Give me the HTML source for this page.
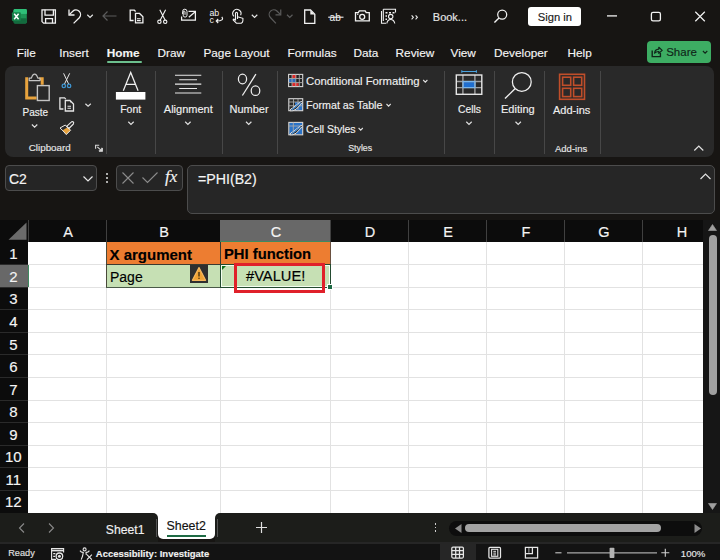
<!DOCTYPE html>
<html><head><meta charset="utf-8">
<style>
html,body{margin:0;padding:0;}
body{width:720px;height:560px;position:relative;overflow:hidden;background:#171513;font-family:"Liberation Sans",sans-serif;}
.t{position:absolute;line-height:1;white-space:nowrap;-webkit-text-stroke:0.15px currentColor;}
svg{overflow:visible}
</style></head><body>
<svg style="position:absolute;left:0px;top:0px" width="720" height="34" viewBox="0 0 720 34">
<g>
<rect x="13.6" y="9" width="13.2" height="14.4" rx="1.3" fill="#1e9456"/>
<rect x="13.6" y="9" width="13.2" height="4.8" rx="1.3" fill="#2fbf78"/>
<rect x="13.6" y="11" width="13.2" height="2.8" fill="#2fbf78"/>
<rect x="13.6" y="18.6" width="13.2" height="4.8" rx="1.3" fill="#136b3e"/>
<rect x="13.6" y="18.6" width="13.2" height="2" fill="#136b3e"/>
<rect x="11.9" y="12.2" width="8.9" height="8.8" rx="1" fill="#17804a"/>
<path d="M14.2 13.8 L18.6 19.3 M18.6 13.8 L14.2 19.3" stroke="#fff" stroke-width="1.5"/>
</g>
<g fill="none" stroke="#f2f2f2" stroke-width="1.3">
<path d="M42 9.8 H55.4 V23.2 H43.6 L42 21.6 Z"/>
<path d="M45 9.8 V15.2 H53.4 V9.8"/>
<path d="M45.6 23.2 V18.7 H52.5 V23.2"/>
<path d="M69 9.5 V15 H74.5" />
<path d="M69.6 14.4 L72.8 11.2 A4.6 4.6 0 0 1 79.3 17.7 L73.6 23.4"/>
</g>
<path d="M87.3 14.8 L90.05 17.400000000000002 L92.8 14.8" fill="none" stroke="#e6e6e6" stroke-width="1.2"/>
<path d="M116.5 16 H103 M107.5 11.5 L103 16 L107.5 20.5" fill="none" stroke="#5c5c5c" stroke-width="1.2"/>
<g fill="none" stroke="#f2f2f2" stroke-width="1.3">
<path d="M133.6 20.5 H130.2 V10.2 H134.3 L135.6 11.5"/>
<path d="M135.5 13.4 H139.6 L142.9 16.8 V22.9 H135.5 Z"/>
<path d="M137 18.8 H140.7 M137 20.6 H140.7" stroke-width="1.1"/>
</g>
<circle cx="140.3" cy="14.6" r="0.7" fill="#f2f2f2"/>
<g fill="none" stroke="#f2f2f2" stroke-width="1.1">
<path d="M159.8 9.7 L165.2 20.2 M165.6 9.7 L160.2 20.2"/>
<circle cx="159.4" cy="21.8" r="1.7"/>
<circle cx="165.2" cy="21.8" r="1.7"/>
</g>
<g fill="none" stroke="#f2f2f2" stroke-width="1.25">
<path d="M181.6 16.5 V20.1 H195.4 V11.3 H188.5"/>
<path d="M188.8 17.2 L195 11.9"/>
<path d="M182.6 14 V11.4 A2.2 2.2 0 0 1 187 11.4 V15.2 A1.9 1.9 0 0 1 183.2 15.2 V12 A0.9 0.9 0 0 1 185 12 V14.8" stroke-width="1"/>
</g>
<text x="209.4" y="16.4" font-family="Liberation Sans" font-size="8.8" fill="#f2f2f2">ab</text>
<text x="209.6" y="23.4" font-family="Liberation Sans" font-size="8.8" fill="#f2f2f2">c</text>
<path d="M221.8 16.8 C223.8 19.5 222 21 216.3 21 M218.2 19 L216.2 21 L218.2 23" fill="none" stroke="#f2f2f2" stroke-width="1.1"/>
<g fill="none" stroke="#f2f2f2" stroke-width="1.1">
<path d="M233.9 16.3 A4.1 4.1 0 1 1 240.6 15.2"/>
<path d="M237.5 19 V13.2 A1 1 0 0 0 235.5 13.2 V20 L234.3 19.2 Q233 18.8 233.2 20 L236.4 23.2 H241.3 Q242.9 22.5 242.9 20.5 V18.3 L237.5 16.8"/>
</g>
<path d="M251.8 14.8 L254.55 17.400000000000002 L257.3 14.8" fill="none" stroke="#e6e6e6" stroke-width="1.2"/>
<g fill="none" stroke="#5c5c5c" stroke-width="1.2">
<path d="M280.75 9.5 V14.8 H275.5"/>
<path d="M280.1 14.2 L276.9 11 A4.6 4.6 0 0 0 270.4 17.5 L275.9 23.3"/>
</g>
<path d="M287 14.8 L289.75 17.400000000000002 L292.5 14.8" fill="none" stroke="#5c5c5c" stroke-width="1.2"/>
<path d="M304.7 10 H310.5 L314.8 14.3 V23.4 H304.7 Z" fill="none" stroke="#f2f2f2" stroke-width="1.3"/>
<path d="M310.3 10.4 V14.5 H314.4 Z" fill="#f2f2f2"/>
<text x="329.6" y="20.6" font-family="Liberation Sans" font-size="10" fill="#f2f2f2">ab</text>
<path d="M328.2 17.2 H343.5" stroke="#f2f2f2" stroke-width="1.1"/>
<g fill="none" stroke="#f2f2f2" stroke-width="1.3">
<path d="M355.5 12.6 H358.3 L359.3 10.9 H365.2 L366.2 12.6 H369.3 V20.8 H355.5 Z"/>
<circle cx="362.2" cy="16.8" r="2.5"/>
</g>
<rect x="357" y="13.6" width="1.4" height="1.2" fill="#f2f2f2"/>
<g fill="none" stroke="#f2f2f2" stroke-width="1.1">
<path d="M383.3 9.3 H395.5 V12.5 M383.3 9.3 V21 M381.5 11 V23.2 H386"/>
<path d="M385.5 12.8 H387.5 M389 12.8 H391 M392.5 12.8 H394.5 M385.5 16 H387 M385.5 19.3 H387" stroke-width="1.4"/>
<circle cx="390.7" cy="16.6" r="2.2"/>
<path d="M386.8 23.5 Q387.5 19.5 390.7 19.5 Q393.9 19.5 394.8 23.5"/>
</g>
<path d="M411.6 15.3 L413.4 17.3 L411.6 19.3 M415.6 15.3 L417.4 17.3 L415.6 19.3" fill="none" stroke="#e8e8e8" stroke-width="1.1"/>
<g fill="none" stroke="#f2f2f2" stroke-width="1.25">
<circle cx="502.2" cy="14.6" r="4.5"/>
<path d="M499 17.9 L494.4 22.5" stroke-width="1.4"/>
</g>
<path d="M607 15.9 H617" stroke="#f2f2f2" stroke-width="1.3"/>
<rect x="651.4" y="12.3" width="9" height="8.6" rx="1.6" fill="none" stroke="#f2f2f2" stroke-width="1.3"/>
<path d="M695.3 11.8 L704.8 21.2 M704.8 11.8 L695.3 21.2" stroke="#f2f2f2" stroke-width="1.2"/>
</svg>
<div class="t" style="left:432.80px;top:11.99px;font-size:11px;color:#e6e6e6;">Book...</div>
<div style="position:absolute;left:528px;top:7px;width:53px;height:19px;background:#fff;border-radius:3px;"></div>
<div class="t" style="left:537.80px;top:11.82px;font-size:11.2px;color:#1a1a1a;">Sign in</div>
<div class="t" style="left:16.70px;top:47.51px;font-size:11.8px;color:#f4f4f4;">File</div>
<div class="t" style="left:59.20px;top:47.51px;font-size:11.8px;color:#f4f4f4;">Insert</div>
<div class="t" style="left:106.70px;top:47.51px;font-size:11.8px;color:#f4f4f4;font-weight:700;">Home</div>
<div class="t" style="left:157.50px;top:47.51px;font-size:11.8px;color:#f4f4f4;">Draw</div>
<div class="t" style="left:203.40px;top:47.51px;font-size:11.8px;color:#f4f4f4;">Page Layout</div>
<div class="t" style="left:287.50px;top:47.51px;font-size:11.8px;color:#f4f4f4;">Formulas</div>
<div class="t" style="left:353.40px;top:47.51px;font-size:11.8px;color:#f4f4f4;">Data</div>
<div class="t" style="left:395.60px;top:47.51px;font-size:11.8px;color:#f4f4f4;">Review</div>
<div class="t" style="left:450.50px;top:47.51px;font-size:11.8px;color:#f4f4f4;">View</div>
<div class="t" style="left:494.00px;top:47.51px;font-size:11.8px;color:#f4f4f4;">Developer</div>
<div class="t" style="left:567.50px;top:47.51px;font-size:11.8px;color:#f4f4f4;">Help</div>
<div style="position:absolute;left:107px;top:61px;width:35px;height:2px;background:#6cc08e;border-radius:1px;"></div>
<div style="position:absolute;left:647px;top:41px;width:64px;height:22px;background:#3dad63;border-radius:4px;"></div>
<svg style="position:absolute;left:640px;top:36px" width="80" height="30" viewBox="640 36 80 30">
<path d="M652.2 50.5 V56.6 H660.4 V53" fill="none" stroke="#10261a" stroke-width="1.4"/>
<path d="M654.6 53.2 Q654.8 49.3 658.8 49.1 V47.3 L662.2 50.4 L658.8 53.3 V51.5 Q656.2 51.4 654.6 53.2 Z" fill="none" stroke="#10261a" stroke-width="1.2" stroke-linejoin="round"/>
<path d="M702.9 51 L705.1 53.2 L707.3 51" fill="none" stroke="#10261a" stroke-width="1.1"/>
</svg>
<div class="t" style="left:666.20px;top:46.56px;font-size:11.5px;color:#10261a;">Share</div>
<div style="position:absolute;left:5px;top:66px;width:709px;height:91px;background:#292929;border-radius:8px;"></div>
<div style="position:absolute;left:106px;top:71px;width:1px;height:83px;background:#474747;"></div>
<div style="position:absolute;left:155px;top:71px;width:1px;height:83px;background:#474747;"></div>
<div style="position:absolute;left:222px;top:71px;width:1px;height:83px;background:#474747;"></div>
<div style="position:absolute;left:277px;top:71px;width:1px;height:83px;background:#474747;"></div>
<div style="position:absolute;left:444px;top:71px;width:1px;height:83px;background:#474747;"></div>
<div style="position:absolute;left:494px;top:71px;width:1px;height:83px;background:#474747;"></div>
<div style="position:absolute;left:543.5px;top:71px;width:1px;height:83px;background:#474747;"></div>
<div style="position:absolute;left:600px;top:71px;width:1px;height:83px;background:#474747;"></div>
<svg style="position:absolute;left:0px;top:66px" width="720" height="94" viewBox="0 66 720 94">
<path d="M28.2 78.8 H26.7 V97.9 H36.6" fill="none" stroke="#e8a33d" stroke-width="3"/>
<path d="M39.3 78.8 H42.2 V84.8" fill="none" stroke="#e8a33d" stroke-width="3"/>
<path d="M29.2 80.6 V78.2 H31.4 Q32.6 74.2 34.6 74.2 Q36.6 74.2 37.8 78.2 H40 V80.6 Z" fill="#292929" stroke="#c4c4c4" stroke-width="1.2" stroke-linejoin="round"/>
<rect x="37.4" y="85.6" width="11.8" height="14.9" fill="#292929" stroke="#c4c4c4" stroke-width="1.4"/>
<path d="M31.9 124.5 L34.6 127.1 L37.3 124.5" fill="none" stroke="#e0e0e0" stroke-width="1.2"/>
<g fill="none" stroke="#e6e6e6" stroke-width="1">
<path d="M63.6 73.3 L68.7 84.2 M69.7 73.3 L64.4 84.2"/>
</g>
<g fill="none" stroke="#3f95d0" stroke-width="1.3">
<circle cx="63.8" cy="85.9" r="1.7"/>
<circle cx="69.1" cy="85.9" r="1.7"/>
</g>
<g fill="none" stroke="#e6e6e6" stroke-width="1.3">
<path d="M63.4 109 H59.9 V97.9 H64.6 L65.8 99.1"/>
<path d="M65.3 100.5 H70 L73.5 104 V111 H65.3 Z"/>
<path d="M67.5 106.3 H71 M67.5 108.2 H71" stroke-width="1.1"/>
</g>
<circle cx="70.6" cy="101.8" r="0.7" fill="#e6e6e6"/>
<path d="M85.4 103.7 L88.1 106.2 L90.8 103.7" fill="none" stroke="#e0e0e0" stroke-width="1.2"/>
<path d="M60 128 L65.3 125 L70.6 130.3 L66.2 134.6 Q63 130.5 60 128 Z" fill="#e8a33d"/>
<path d="M60 128 L65.3 125 L67.6 127.3 L62.7 130.3 Z" fill="#292929"/>
<path d="M60 128 L65.3 125 L70.6 130.3 L66.2 134.6 Q63 130.5 60 128 Z" fill="none" stroke="#e8e8e8" stroke-width="1"/>
<path d="M66.7 126.3 L68.9 128.5 L73.4 124 Q74.2 122.6 73.1 121.8 Q72 121.3 71.2 122.1 Z" fill="none" stroke="#e8e8e8" stroke-width="1.1" stroke-linejoin="round"/>
<g fill="none" stroke="#d8d8d8" stroke-width="1.1">
<path d="M95.6 148.8 V145.2 H99.2"/>
<path d="M102.3 148 V151.3 H99"/>
<path d="M97.3 146.9 L101.8 150.8 M101.8 147.8 V150.8 H98.8"/>
</g>
<path d="M123.3 90.8 L130.7 72.4 L138.1 90.8 M126.1 84.4 H135.4" fill="none" stroke="#f0f0f0" stroke-width="1.25"/>
<rect x="115.9" y="92" width="29.5" height="7.6" fill="#ffffff"/>
<path d="M128.3 121.8 L131 124.4 L133.7 121.8" fill="none" stroke="#e0e0e0" stroke-width="1.2"/>
<path d="M175 75.2 H201.3 M179.2 79.7 H197 M175 84.1 H201.3 M179.2 88.5 H197 M175 93 H201.3" stroke="#e8e8e8" stroke-width="1.15"/>
<path d="M185.2 121.8 L187.9 124.4 L190.6 121.8" fill="none" stroke="#e0e0e0" stroke-width="1.2"/>
<g fill="none" stroke="#f0f0f0" stroke-width="1.25">
<ellipse cx="242.5" cy="79" rx="4.1" ry="4.8"/>
<ellipse cx="255.5" cy="90.7" rx="4.3" ry="4.8"/>
<path d="M255.9 74.2 L242.4 95.5"/>
</g>
<path d="M246 121.8 L248.7 124.4 L251.4 121.8" fill="none" stroke="#e0e0e0" stroke-width="1.2"/>

<rect x="288.7" y="74.5" width="14" height="12" fill="#222"/>
<rect x="292" y="74.5" width="4.3" height="3.9" fill="#e02828"/>
<rect x="288.7" y="78.6" width="7.1" height="3.9" fill="#2a6cc0"/>
<rect x="292" y="82.7" width="6.6" height="4" fill="#e02828"/>
<g fill="none" stroke="#d6d6d6" stroke-width="1.1">
<rect x="288.6" y="74.4" width="14.1" height="12.2"/>
<path d="M292 74.4 V86.6 M295.8 74.4 V86.6 M299.3 74.4 V86.6 M288.6 78.5 H302.7 M288.6 82.6 H302.7" stroke="#a8a8a8" stroke-width="0.9"/>
</g>
<path d="M423.2 80 L425.3 82.1 L427.4 80" fill="none" stroke="#e0e0e0" stroke-width="1.1"/>

<rect x="295" y="102" width="7.7" height="8.6" fill="#2a73c8"/>
<g fill="none" stroke="#d6d6d6" stroke-width="1.1">
<rect x="288.8" y="98.7" width="13.9" height="12"/>
<path d="M293.5 98.7 V110.7 M298 98.7 V110.7 M288.8 102 H302.7 M288.8 105.8 H302.7" stroke="#a8a8a8" stroke-width="0.9"/>
</g>
<path d="M290 110.8 Q290.2 108.6 292.6 108 L300.6 101.8 Q302.4 101 302.5 102.6 L296 109.3 Q293 111.3 290 110.8 Z" fill="#292929" stroke="#e0e0e0" stroke-width="1"/>
<path d="M291.6 110 L300.8 102.8" stroke="#4a90d9" stroke-width="1.1"/>
<path d="M386.5 104 L388.6 106.1 L390.7 104" fill="none" stroke="#e0e0e0" stroke-width="1.1"/>

<rect x="289.2" y="122.9" width="13.3" height="11.6" fill="#2a73c8"/>
<g fill="none" stroke="#d6d6d6" stroke-width="1.1">
<rect x="288.8" y="122.4" width="13.9" height="12.4"/>
<path d="M293.3 122.4 V134.8 M288.8 126 H302.7" stroke="#a8a8a8" stroke-width="0.9"/>
</g>
<path d="M290 134.8 Q290.2 132.6 292.6 132 L300.6 125.8 Q302.4 125 302.5 126.6 L296 133.3 Q293 135.3 290 134.8 Z" fill="#292929" stroke="#e0e0e0" stroke-width="1"/>
<path d="M291.6 134 L300.8 126.8" stroke="#4a90d9" stroke-width="1.1"/>
<path d="M358.6 128 L360.7 130.1 L362.8 128" fill="none" stroke="#e0e0e0" stroke-width="1.1"/>

<path d="M461.8 71.5 H476.4 M461.8 70.2 V72.8 M476.4 70.2 V72.8" stroke="#4aa3df" stroke-width="1.1"/>
<rect x="463" y="81.5" width="12" height="6.1" fill="#1f6fd0"/>
<g fill="none" stroke="#a0a0a0" stroke-width="1.4">
<path d="M462.9 75 V94.3 M474.9 75 V94.3 M456.2 81.5 H481.8 M456.2 87.6 H481.8"/>
</g>
<rect x="463" y="81.5" width="12" height="6.1" fill="none" stroke="#7ab8ee" stroke-width="1.1"/>
<rect x="456.3" y="75" width="25.5" height="19.3" fill="none" stroke="#e6e6e6" stroke-width="1.4"/>
<path d="M466.3 121.8 L469 124.4 L471.7 121.8" fill="none" stroke="#e0e0e0" stroke-width="1.2"/>

<circle cx="521.8" cy="81.9" r="9.4" fill="none" stroke="#f0f0f0" stroke-width="1.25"/>
<path d="M515 88.7 L505 98.6" stroke="#f0f0f0" stroke-width="1.35"/>
<path d="M515.5 121.8 L518.2 124.4 L520.9 121.8" fill="none" stroke="#e0e0e0" stroke-width="1.2"/>

<g fill="none" stroke="#c04e2a" stroke-width="1.6">
<rect x="559.6" y="74.3" width="24.9" height="25"/>
<rect x="562.6" y="77.2" width="8.1" height="8.1"/>
<rect x="573.6" y="77.2" width="8.1" height="8.1"/>
<rect x="562.6" y="88.3" width="8.1" height="8.3"/>
<rect x="573.6" y="88.3" width="8.1" height="8.3"/>
</g>
<path d="M694.3 150.5 L698.8 146 L703.3 150.5" fill="none" stroke="#e0e0e0" stroke-width="1.2"/>
</svg>
<div class="t" style="left:22.60px;top:107.93px;font-size:10px;color:#f0f0f0;">Paste</div>
<div class="t" style="left:28.80px;top:143.30px;font-size:9.8px;color:#e6e6e6;">Clipboard</div>
<div class="t" style="left:120.20px;top:104.41px;font-size:10.5px;color:#f0f0f0;">Font</div>
<div class="t" style="left:163.80px;top:103.99px;font-size:11px;color:#f0f0f0;">Alignment</div>
<div class="t" style="left:229.50px;top:103.99px;font-size:11px;color:#f0f0f0;">Number</div>
<div class="t" style="left:306.00px;top:75.83px;font-size:11.3px;color:#f0f0f0;">Conditional Formatting</div>
<div class="t" style="left:306.00px;top:99.94px;font-size:10.7px;color:#f0f0f0;">Format as Table</div>
<div class="t" style="left:306.00px;top:124.41px;font-size:10.5px;color:#f0f0f0;">Cell Styles</div>
<div class="t" style="left:348.20px;top:144.15px;font-size:8.8px;color:#e6e6e6;">Styles</div>
<div class="t" style="left:458.00px;top:104.88px;font-size:10.3px;color:#f0f0f0;">Cells</div>
<div class="t" style="left:501.00px;top:103.69px;font-size:11px;color:#f0f0f0;">Editing</div>
<div class="t" style="left:553.00px;top:105.49px;font-size:11px;color:#f0f0f0;">Add-ins</div>
<div class="t" style="left:555.00px;top:143.96px;font-size:9.5px;color:#e6e6e6;">Add-ins</div>
<div style="position:absolute;left:5px;top:165px;width:92px;height:26px;box-sizing:border-box;background:#252525;border:1px solid #4c4c4c;border-radius:4px;"></div>
<div class="t" style="left:9.00px;top:172.15px;font-size:14px;color:#f4f4f4;">C2</div>
<svg style="position:absolute;left:83px;top:176px" width="10" height="6" viewBox="0 0 10 6"><path d="M0.5 0.5 L5 5 L9.5 0.5" fill="none" stroke="#e6e6e6" stroke-width="1.2"/></svg>
<div style="position:absolute;left:106px;top:173px;width:2px;height:2px;background:#e0e0e0;border-radius:1px;"></div>
<div style="position:absolute;left:106px;top:177px;width:2px;height:2px;background:#e0e0e0;border-radius:1px;"></div>
<div style="position:absolute;left:106px;top:180.8px;width:2px;height:2px;background:#e0e0e0;border-radius:1px;"></div>
<div style="position:absolute;left:116px;top:165px;width:67px;height:26px;box-sizing:border-box;background:#252525;border:1px solid #4c4c4c;border-radius:4px;"></div>
<svg style="position:absolute;left:122px;top:172px" width="12" height="12" viewBox="0 0 12 12"><path d="M0.5 0.5 L11.5 11.5 M11.5 0.5 L0.5 11.5" stroke="#8c8c8c" stroke-width="1.1"/></svg>
<svg style="position:absolute;left:142px;top:172px" width="16" height="11" viewBox="0 0 16 11"><path d="M0.5 5.5 L5.5 10.5 L15.5 0.5" fill="none" stroke="#8c8c8c" stroke-width="1.1"/></svg>
<div class="t" style="left:165px;top:168px;font-family:'Liberation Serif',serif;font-style:italic;font-size:17px;color:#f4f4f4;">fx</div>
<div style="position:absolute;left:187px;top:165px;width:528px;height:49px;box-sizing:border-box;background:#262626;border:1px solid #4c4c4c;border-radius:5px;"></div>
<div class="t" style="left:198.00px;top:171.78px;font-size:14.2px;color:#f4f4f4;">=PHI(B2)</div>
<svg style="position:absolute;left:700px;top:173px" width="11" height="7" viewBox="0 0 11 7"><path d="M0.5 6 L5.5 1 L10.5 6" fill="none" stroke="#e0e0e0" stroke-width="1.2"/></svg>
<div style="position:absolute;left:0px;top:220px;width:703px;height:22px;background:#0c0c0c;"></div>
<div style="position:absolute;left:0px;top:242px;width:28px;height:271px;background:#0c0c0c;"></div>
<div style="position:absolute;left:28px;top:242px;width:675px;height:271px;background:#fff;"></div>
<svg style="position:absolute;left:8px;top:222px" width="19" height="18" viewBox="0 0 19 18"><path d="M18.5 0.5 V17.8 H0.5 Z" fill="#6b6b6b"/></svg>
<div style="position:absolute;left:28px;top:220px;width:1px;height:22px;background:#404040;"></div>
<div style="position:absolute;left:106px;top:220px;width:1px;height:22px;background:#404040;"></div>
<div style="position:absolute;left:220px;top:220px;width:1px;height:22px;background:#404040;"></div>
<div style="position:absolute;left:330px;top:220px;width:1px;height:22px;background:#404040;"></div>
<div style="position:absolute;left:408px;top:220px;width:1px;height:22px;background:#404040;"></div>
<div style="position:absolute;left:486px;top:220px;width:1px;height:22px;background:#404040;"></div>
<div style="position:absolute;left:564px;top:220px;width:1px;height:22px;background:#404040;"></div>
<div style="position:absolute;left:642px;top:220px;width:1px;height:22px;background:#404040;"></div>
<div style="position:absolute;left:220px;top:220px;width:110px;height:22px;background:#686868;"></div>
<div style="position:absolute;left:220px;top:240.5px;width:110px;height:1.2px;background:#3f8a60;"></div>
<div style="position:absolute;left:0px;top:264px;width:28px;height:23.5px;background:#686868;"></div>
<div style="position:absolute;left:27.5px;top:264px;width:1.2px;height:23.5px;background:#3f8a60;"></div>
<div style="position:absolute;left:106px;top:242px;width:1px;height:271px;background:#e2e2e2;"></div>
<div style="position:absolute;left:220px;top:242px;width:1px;height:271px;background:#e2e2e2;"></div>
<div style="position:absolute;left:330px;top:242px;width:1px;height:271px;background:#e2e2e2;"></div>
<div style="position:absolute;left:408px;top:242px;width:1px;height:271px;background:#e2e2e2;"></div>
<div style="position:absolute;left:486px;top:242px;width:1px;height:271px;background:#e2e2e2;"></div>
<div style="position:absolute;left:564px;top:242px;width:1px;height:271px;background:#e2e2e2;"></div>
<div style="position:absolute;left:642px;top:242px;width:1px;height:271px;background:#e2e2e2;"></div>
<div style="position:absolute;left:28px;top:264px;width:675px;height:1px;background:#e2e2e2;"></div>
<div style="position:absolute;left:0px;top:264px;width:28px;height:1px;background:#2a2a2a;"></div>
<div style="position:absolute;left:28px;top:287px;width:675px;height:1px;background:#e2e2e2;"></div>
<div style="position:absolute;left:0px;top:287px;width:28px;height:1px;background:#2a2a2a;"></div>
<div style="position:absolute;left:28px;top:309px;width:675px;height:1px;background:#e2e2e2;"></div>
<div style="position:absolute;left:0px;top:309px;width:28px;height:1px;background:#2a2a2a;"></div>
<div style="position:absolute;left:28px;top:332px;width:675px;height:1px;background:#e2e2e2;"></div>
<div style="position:absolute;left:0px;top:332px;width:28px;height:1px;background:#2a2a2a;"></div>
<div style="position:absolute;left:28px;top:354px;width:675px;height:1px;background:#e2e2e2;"></div>
<div style="position:absolute;left:0px;top:354px;width:28px;height:1px;background:#2a2a2a;"></div>
<div style="position:absolute;left:28px;top:377px;width:675px;height:1px;background:#e2e2e2;"></div>
<div style="position:absolute;left:0px;top:377px;width:28px;height:1px;background:#2a2a2a;"></div>
<div style="position:absolute;left:28px;top:400px;width:675px;height:1px;background:#e2e2e2;"></div>
<div style="position:absolute;left:0px;top:400px;width:28px;height:1px;background:#2a2a2a;"></div>
<div style="position:absolute;left:28px;top:422px;width:675px;height:1px;background:#e2e2e2;"></div>
<div style="position:absolute;left:0px;top:422px;width:28px;height:1px;background:#2a2a2a;"></div>
<div style="position:absolute;left:28px;top:445px;width:675px;height:1px;background:#e2e2e2;"></div>
<div style="position:absolute;left:0px;top:445px;width:28px;height:1px;background:#2a2a2a;"></div>
<div style="position:absolute;left:28px;top:467px;width:675px;height:1px;background:#e2e2e2;"></div>
<div style="position:absolute;left:0px;top:467px;width:28px;height:1px;background:#2a2a2a;"></div>
<div style="position:absolute;left:28px;top:490px;width:675px;height:1px;background:#e2e2e2;"></div>
<div style="position:absolute;left:0px;top:490px;width:28px;height:1px;background:#2a2a2a;"></div>
<div class="t" style="left:29px;width:78px;text-align:center;top:224.72px;font-size:14.5px;color:#f4f4f4;">A</div>
<div class="t" style="left:107px;width:114px;text-align:center;top:224.72px;font-size:14.5px;color:#f4f4f4;">B</div>
<div class="t" style="left:221px;width:110px;text-align:center;top:224.72px;font-size:14.5px;color:#f4f4f4;">C</div>
<div class="t" style="left:331px;width:78px;text-align:center;top:224.72px;font-size:14.5px;color:#f4f4f4;">D</div>
<div class="t" style="left:409px;width:78px;text-align:center;top:224.72px;font-size:14.5px;color:#f4f4f4;">E</div>
<div class="t" style="left:487px;width:78px;text-align:center;top:224.72px;font-size:14.5px;color:#f4f4f4;">F</div>
<div class="t" style="left:565px;width:78px;text-align:center;top:224.72px;font-size:14.5px;color:#f4f4f4;">G</div>
<div class="t" style="left:643px;width:78px;text-align:center;top:224.72px;font-size:14.5px;color:#f4f4f4;">H</div>
<div class="t" style="left:-0.7px;width:28px;text-align:center;top:246.30px;font-size:15px;color:#f4f4f4;">1</div>
<div class="t" style="left:-0.7px;width:28px;text-align:center;top:268.85px;font-size:15px;color:#f4f4f4;">2</div>
<div class="t" style="left:-0.7px;width:28px;text-align:center;top:291.40px;font-size:15px;color:#f4f4f4;">3</div>
<div class="t" style="left:-0.7px;width:28px;text-align:center;top:313.95px;font-size:15px;color:#f4f4f4;">4</div>
<div class="t" style="left:-0.7px;width:28px;text-align:center;top:336.50px;font-size:15px;color:#f4f4f4;">5</div>
<div class="t" style="left:-0.7px;width:28px;text-align:center;top:359.05px;font-size:15px;color:#f4f4f4;">6</div>
<div class="t" style="left:-0.7px;width:28px;text-align:center;top:381.60px;font-size:15px;color:#f4f4f4;">7</div>
<div class="t" style="left:-0.7px;width:28px;text-align:center;top:404.15px;font-size:15px;color:#f4f4f4;">8</div>
<div class="t" style="left:-0.7px;width:28px;text-align:center;top:426.70px;font-size:15px;color:#f4f4f4;">9</div>
<div class="t" style="left:-0.7px;width:28px;text-align:center;top:449.25px;font-size:15px;color:#f4f4f4;">10</div>
<div class="t" style="left:-0.7px;width:28px;text-align:center;top:471.80px;font-size:15px;color:#f4f4f4;">11</div>
<div class="t" style="left:-0.7px;width:28px;text-align:center;top:494.35px;font-size:15px;color:#f4f4f4;">12</div>
<div style="position:absolute;left:106px;top:242px;width:224px;height:22px;background:#ed7d31;"></div>
<div style="position:absolute;left:106px;top:264px;width:224px;height:23px;background:#c6e0b4;"></div>
<div style="position:absolute;left:106px;top:242px;width:1px;height:46px;background:#4a4a3a;"></div>
<div style="position:absolute;left:106px;top:264px;width:224px;height:1px;background:#3a3a30;"></div>
<div style="position:absolute;left:220px;top:242px;width:1px;height:45px;background:#3a3a30;"></div>
<div style="position:absolute;left:106px;top:287px;width:224px;height:1px;background:#4a5a48;"></div>
<div style="position:absolute;left:330px;top:242px;width:1px;height:22px;background:#6a5040;"></div>
<div class="t" style="left:109.50px;top:246.90px;font-size:15px;color:#000;font-weight:700;">X argument</div>
<div class="t" style="left:224.00px;top:247.07px;font-size:14.8px;color:#000;font-weight:700;">PHI function</div>
<div class="t" style="left:110.00px;top:269.75px;font-size:14.0px;color:#000;">Page</div>
<div class="t" style="left:246.00px;top:268.65px;font-size:14.7px;color:#000;">#VALUE!</div>
<div style="position:absolute;left:190px;top:265px;width:18px;height:18px;background:#2f2f2f;"></div>
<svg style="position:absolute;left:191px;top:266px" width="16" height="16" viewBox="0 0 16 16"><path d="M8 1.6 L14.6 14.3 H1.4 Z" fill="#f0a232" stroke="#f5b860" stroke-width="1.2" stroke-linejoin="round"/><path d="M8 6 V10.6" stroke="#3a2a10" stroke-width="1.3"/><circle cx="8" cy="12.3" r="0.75" fill="#3a2a10"/></svg>
<div style="position:absolute;left:220px;top:264px;width:111px;height:24px;box-sizing:border-box;border:1px solid #234a30;"></div>
<div style="position:absolute;left:221px;top:265px;width:109px;height:22px;box-sizing:border-box;border:1px solid #f4fff0;"></div>
<div style="position:absolute;left:328px;top:285px;width:4px;height:4px;background:#1e6b45;box-shadow:0 0 0 1px #fff;"></div>
<svg style="position:absolute;left:222px;top:266px" width="4" height="4" viewBox="0 0 4 4"><path d="M0 0 H4 L0 4 Z" fill="#0e6e1a"/></svg>
<div style="position:absolute;left:234px;top:263px;width:91px;height:30px;box-sizing:border-box;border:3px solid #e0202a;"></div>
<div style="position:absolute;left:703px;top:220px;width:17px;height:293px;background:#161616;"></div>
<svg style="position:absolute;left:708px;top:224px" width="9" height="7" viewBox="0 0 9 7"><path d="M4.5 0.5 L8.5 6.5 H0.5 Z" fill="#a0a0a0" stroke="#a0a0a0" stroke-width="0.6" stroke-linejoin="round"/></svg>
<div style="position:absolute;left:709px;top:235px;width:8px;height:160px;background:#a0a0a0;border-radius:4px;"></div>
<svg style="position:absolute;left:708px;top:503px" width="9" height="7" viewBox="0 0 9 7"><path d="M4.5 6.5 L8.5 0.5 H0.5 Z" fill="#a0a0a0" stroke="#a0a0a0" stroke-width="0.6" stroke-linejoin="round"/></svg>
<div style="position:absolute;left:150px;top:513px;width:72px;height:8px;background:#fff;"></div>
<div style="position:absolute;left:0px;top:513px;width:158px;height:30px;background:#1c1d1a;border-top-right-radius:5px;"></div>
<div style="position:absolute;left:215px;top:513px;width:505px;height:30px;background:#1c1d1a;border-top-left-radius:5px;"></div>
<svg style="position:absolute;left:18px;top:523px" width="7" height="10" viewBox="0 0 7 10"><path d="M6 0.5 L1.5 5 L6 9.5" fill="none" stroke="#8a8a8a" stroke-width="1.1"/></svg>
<svg style="position:absolute;left:48px;top:523px" width="7" height="10" viewBox="0 0 7 10"><path d="M1 0.5 L5.5 5 L1 9.5" fill="none" stroke="#8a8a8a" stroke-width="1.1"/></svg>
<div class="t" style="left:105.80px;top:523.87px;font-size:12.2px;color:#f0f0f0;">Sheet1</div>
<div style="position:absolute;left:155.5px;top:519px;width:1px;height:18px;background:#555;"></div>
<div style="position:absolute;left:158px;top:513px;width:57px;height:26px;background:#fff;border-radius:0 0 5px 5px;"></div>
<div class="t" style="left:166.50px;top:520.10px;font-size:12.4px;color:#111;">Sheet2</div>
<div style="position:absolute;left:167px;top:535px;width:39px;height:2px;background:#1e6b45;"></div>
<div style="position:absolute;left:217px;top:519px;width:1px;height:18px;background:#555;"></div>
<svg style="position:absolute;left:256px;top:522px" width="11" height="11" viewBox="0 0 11 11"><path d="M5.5 0 V11 M0 5.5 H11" stroke="#e0e0e0" stroke-width="1.2"/></svg>
<div style="position:absolute;left:434.5px;top:523.2px;width:1.6px;height:1.6px;background:#d0d0d0;"></div>
<div style="position:absolute;left:434.5px;top:526.7px;width:1.6px;height:1.6px;background:#d0d0d0;"></div>
<div style="position:absolute;left:434.5px;top:530.2px;width:1.6px;height:1.6px;background:#d0d0d0;"></div>
<div style="position:absolute;left:449px;top:520.5px;width:253px;height:15px;background:#0d0d0d;border-radius:7.5px;"></div>
<svg style="position:absolute;left:455px;top:524px" width="7" height="9" viewBox="0 0 7 9"><path d="M6.5 0 V9 L0 4.5 Z" fill="#8c8c8c"/></svg>
<div style="position:absolute;left:465px;top:524px;width:196px;height:7.5px;background:#a3a3a3;border-radius:4px;"></div>
<svg style="position:absolute;left:694px;top:524px" width="7" height="9" viewBox="0 0 7 9"><path d="M0.5 0 V9 L7 4.5 Z" fill="#8c8c8c"/></svg>
<div style="position:absolute;left:0px;top:542px;width:720px;height:18px;background:#131313;"></div>
<div style="position:absolute;left:0px;top:542px;width:720px;height:1.5px;background:#262626;"></div>
<div class="t" style="left:8.20px;top:549.01px;font-size:9.2px;color:#e0e0e0;">Ready</div>
<div style="position:absolute;left:440px;top:543.5px;width:36px;height:16.5px;background:#262626;"></div>
<svg style="position:absolute;left:0px;top:540px" width="720" height="20" viewBox="0 540 720 20">
<g fill="none" stroke="#e6e6e6" stroke-width="1.15">
<path d="M56 559.4 H51.6 V548.6 H63.6 V552.5"/>
<path d="M51.6 550.6 H63.6" stroke-width="1.6"/>
<path d="M53.2 553.6 H55.4 M53.2 556.4 H55.2"/>
<circle cx="59.4" cy="556.3" r="3.3" stroke-width="1.3"/>
</g>
<circle cx="59.4" cy="556.3" r="1.5" fill="#e6e6e6"/>
<g fill="none" stroke="#e6e6e6" stroke-width="1.1" stroke-linejoin="round">
<circle cx="84.6" cy="549.4" r="1.5"/>
<path d="M80 550.6 Q81.2 552.6 83.3 552.4 L82.6 556 L81.2 559.6 M89.4 550.6 Q88.2 552.6 86 552.4 L86.3 555"/>
<path d="M86.9 554.7 L91.9 559.7 M91.9 554.7 L86.9 559.7"/>
</g>
<g fill="none" stroke="#e6e6e6" stroke-width="1.25">
<rect x="451.8" y="547" width="11.6" height="11" rx="1.2"/>
<path d="M455.7 547 V558 M459.5 547 V558 M451.8 550.7 H463.4 M451.8 554.3 H463.4"/>
<rect x="488.9" y="547.4" width="11.6" height="10.6" rx="1"/>
<rect x="491.6" y="549.3" width="6.2" height="7" stroke-width="1.1"/>
<path d="M493.3 551.3 H496 M493.3 553.1 H496 M493.3 554.9 H496" stroke-width="1"/>
<rect x="525.4" y="547.4" width="12.2" height="10.6"/>
<path d="M525.4 553.5 H532.4 V547.4"/>
<path d="M528.9 548 V552.8" stroke="#a8a8a8" stroke-width="1"/>
</g>
<path d="M555.3 552.8 H561.5" stroke="#c8c8c8" stroke-width="1.1"/>
<path d="M567 552.9 H657" stroke="#a8a8a8" stroke-width="1.3"/>
<rect x="609.6" y="547.7" width="4.8" height="10.4" rx="0.8" fill="#b4b4b4"/>
<path d="M665.3 548.8 V556.8 M661.3 552.8 H669.3" stroke="#d0d0d0" stroke-width="1.1"/>
</svg>
<div class="t" style="left:95.80px;top:549.16px;font-size:9.5px;color:#f0f0f0;font-weight:700;">Accessibility: Investigate</div>
<div class="t" style="left:680.80px;top:549.07px;font-size:9.6px;color:#e6e6e6;">100%</div>
</body></html>
